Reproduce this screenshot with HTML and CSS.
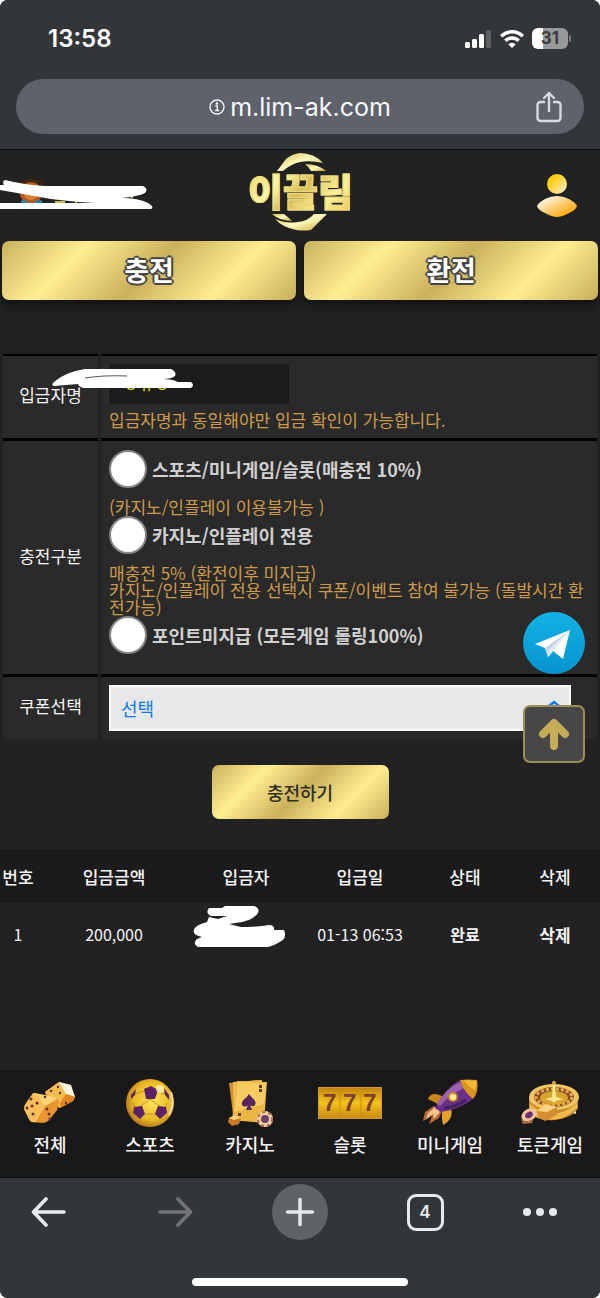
FILE: index.html
```
<!DOCTYPE html>
<html lang="ko">
    <head>
        <meta charset="utf-8" />
        <title>이끌림 - 충전</title>
        <meta name="viewport" content="width=device-width" />
        <link rel="stylesheet" href="styles.css">
    </head>

    <body>
        <div class="m-phone">
            <!-- 상태바 / 주소창 -->
            <div class="m-browser">
                <div class="status">
                    <span class="time">13:58</span>
                    <div class="signs">
                        <svg width="27" height="18" viewBox="0 0 27 18" fill="#fff">
                            <rect x="0" y="12" width="5" height="6" rx="1.5"/>
                            <rect x="7" y="9" width="5" height="9" rx="1.5"/>
                            <rect x="14" y="4" width="5" height="14" rx="1.5"/>
                            <rect x="21" y="0" width="5" height="18" rx="1.5" fill="#5d6063"/>
                        </svg>
                        <svg width="24" height="18" viewBox="0 0 24 18" fill="none" stroke="#fff" stroke-width="3.4">
                            <path d="M1.200 6.200a15.500 15.500 0 0 1 21.600 0M5.300 10.700a9.600 9.600 0 0 1 13.400 0"/>
                            <path d="M12 18l-3.800-3.800a5.500 5.500 0 0 1 7.600 0z" fill="#fff" stroke="none"/>
                        </svg>
                        <span class="battery">31</span>
                    </div>
                </div>
                <div class="address">
                    <a class="url" href="#">
                        <svg width="16" height="16" viewBox="0 0 16 16" fill="none" stroke="#f4f5f7" stroke-width="1.4">
                            <circle cx="8" cy="8" r="7"/>
                            <path d="M6.300 7h2v4.300M6 11.500h4.300"/>
                            <circle cx="7.900" cy="4.500" r=".6" fill="#f4f5f7"/>
                        </svg>
                        <span>m.lim-ak.com</span>
                    </a>
                    <button class="share" type="button" aria-label="공유">
                        <svg width="26" height="32" viewBox="0 0 26 32" fill="none" stroke="#d5d9e1" stroke-width="2.400" stroke-linecap="round" stroke-linejoin="round">
                            <path d="M8 11H4.500A3 3 0 0 0 1.500 14v13a3 3 0 0 0 3 3h17a3 3 0 0 0 3-3V14a3 3 0 0 0-3-3H18M13 20V2M8 7l5-5 5 5"/>
                        </svg>
                    </button>
                </div>
            </div>

            <!-- 헤더 -->
            <header class="m-header">
                <svg class="member" width="160" height="90" viewBox="0 0 160 90">
                    <circle cx="31" cy="42" r="11" fill="#b35b1f"/>
                    <circle cx="31" cy="42" r="7" fill="#d98235"/>
                    <path d="M20 33q10-7 24-1" stroke="#4a2a12" stroke-width="2" fill="none"/>
                    <path d="M21 51h6M35 51h7" stroke="#2687b5" stroke-width="3"/>
                    <path d="M55 51h10M76 50v4M92 50v4M115 50v4M132 42v5" stroke="#d6b754" stroke-width="2"/>
                    <path fill="#fff" d="M5 29Q25 34 45 35H143Q149 38 145 42 140 45 122 47 138 47 148 52 155 56 151 58H0V52H96Q60 50 40 46L0 39V34H4Q2 30 5 29z"/>
                </svg>
                <a class="logo" href="#">
                    <svg width="62" height="80" viewBox="0 0 62 80">
                        <defs>
                            <linearGradient id="logoGold" x1="0" y1="0" x2="1" y2="1">
                                <stop offset="0" stop-color="#d9bd4c"/>
                                <stop offset=".5" stop-color="#fdfbc0"/>
                                <stop offset="1" stop-color="#c7a334"/>
                            </linearGradient>
                        </defs>
                        <g fill="url(#logoGold)">
                            <path d="M7 19L16 7Q22 2 30 1Q44 1 53 11Q40 8 30 10Q21 12 13 19z"/>
                            <path d="M35 12Q48 12 56 19H41Q39 15 35 12z"/>
                            <path d="M57 62L41 78Q34 79 26 78Q12 75 5 67Q17 72 28 70Q38 69 44 62z"/>
                            <path d="M2 62H14Q19 66 22 69Q10 69 2 62z"/>
                        </g>
                    </svg>
                    <span>이끌림</span>
                </a>
                <a class="my" href="#" aria-label="내 정보">
                    <svg width="40" height="44" viewBox="0 0 40 44">
                        <defs>
                            <linearGradient id="myTop" x1="0" y1="0" x2="1" y2="1">
                                <stop offset=".3" stop-color="#ffcd16"/>
                                <stop offset="1" stop-color="#fff3dc"/>
                            </linearGradient>
                            <linearGradient id="myBody" x1="0" y1="0" x2="1" y2="1">
                                <stop offset=".2" stop-color="#fff0d5"/>
                                <stop offset=".8" stop-color="#ffab12"/>
                            </linearGradient>
                        </defs>
                        <circle cx="20" cy="10" r="10" fill="url(#myTop)"/>
                        <path d="M0 32Q1 29 8 25Q14 22 20 22Q26 22 32 25Q39 29 40 32Q39 36 32 39Q25 43 20 43Q15 43 8 39Q1 36 0 32z" fill="url(#myBody)"/>
                    </svg>
                </a>
            </header>

            <nav class="m-tabs">
                <a class="f-gold" href="#">충전</a>
                <a class="f-gold" href="#">환전</a>
            </nav>

            <!-- 충전 신청 -->
            <form class="m-charge">
                <table>
                    <tr>
                        <th><label for="name">입금자명</label></th>
                        <td>
                            <input class="name" id="name" type="text" value="ㅇㅠㅇ" />
                            <p>입금자명과 동일해야만 입금 확인이 가능합니다.</p>
                        </td>
                    </tr>
                    <tr>
                        <th>충전구분</th>
                        <td>
                            <label class="kind"><input type="radio" name="kind" />스포츠/미니게임/슬롯(매충전 10%)</label>
                            <p>(카지노/인플레이 이용불가능 )</p>
                            <label class="kind"><input type="radio" name="kind" />카지노/인플레이 전용</label>
                            <p>매충전 5% (환전이후 미지급)<br />카지노/인플레이 전용 선택시 쿠폰/이벤트 참여 불가능 (돌발시간 환전가능)</p>
                            <label class="kind last"><input type="radio" name="kind" />포인트미지급 (모든게임 롤링100%)</label>
                        </td>
                    </tr>
                    <tr>
                        <th><label for="coupon">쿠폰선택</label></th>
                        <td>
                            <div class="select">
                                <select id="coupon"><option>선택</option></select>
                                <svg width="14" height="18" viewBox="0 0 14 18" fill="none" stroke="#0a7cff" stroke-width="2.500" stroke-linecap="round">
                                    <path d="M2 6l5-4 5 4M2 12l5 4 5-4"/>
                                </svg>
                            </div>
                        </td>
                    </tr>
                </table>
                <button class="submit f-gold" type="button">충전하기</button>

                <svg class="mark" width="146" height="24" viewBox="0 0 146 24">
                    <path fill="#fff" d="M2 15Q14 4 34 1H120Q126 4 124 8 121 11 111 11 122 11 127 14H140Q144 17 140 20H33Q28 19 27 16 14 17 4 18 0 18 2 15z"/>
                    <path d="M34 10Q52 7 76 8" stroke="#555" stroke-width="1" fill="none"/>
                </svg>
                <div class="floats">
                    <a class="telegram" href="#" aria-label="텔레그램">
                        <svg width="62" height="62" viewBox="0 0 62 62">
                            <defs>
                                <linearGradient id="tg" x1="0" y1="0" x2="0" y2="1">
                                    <stop offset="0" stop-color="#13b3e4"/>
                                    <stop offset="1" stop-color="#0693cf"/>
                                </linearGradient>
                            </defs>
                            <circle cx="31" cy="31" r="31" fill="url(#tg)"/>
                            <path d="M12 32L47 18L40 47L30 39L25 45L22 36z" fill="#fff"/>
                            <path d="M22 36L47 18L26 38L25 45z" fill="#c3d5e6"/>
                            <path d="M26 38L47 18L30 39L25 45z" fill="#dfe9f2"/>
                        </svg>
                    </a>
                    <button class="top" type="button" aria-label="맨 위로">
                        <svg width="32" height="34" viewBox="0 0 32 34" fill="none" stroke="#c6ab59" stroke-width="8" stroke-linecap="round" stroke-linejoin="round">
                            <path d="M16 29V7M5 17L16 6l11 11"/>
                        </svg>
                    </button>
                </div>
            </form>

            <!-- 충전 내역 -->
            <div class="m-list">
                <table>
                    <thead>
                        <tr><th class="no">번호</th><th class="money">입금금액</th><th class="who">입금자</th><th class="date">입금일</th><th class="state">상태</th><th class="del">삭제</th></tr>
                    </thead>
                    <tbody>
                        <tr>
                            <td>1</td>
                            <td>200,000</td>
                            <td>
                                <svg width="94" height="44" viewBox="0 0 94 44">
                                    <path fill="#fff" d="M17 3L30 3 33 1H62Q68 3 66 8 61 15 50 17L37 19 49 22Q65 22 77 20 83 20 82 25L92 25Q94 29 92 34 86 39 76 42H6Q0 39 5 34L10 32Q0 30 2 25 3 20 15 17L17 12 26 14 35 11H19Q13 8 17 3z"/>
                                </svg>
                            </td>
                            <td>01-13 06:53</td>
                            <td class="done">완료</td>
                            <td><a href="#">삭제</a></td>
                        </tr>
                    </tbody>
                </table>
            </div>

            <!-- 하단 메뉴 -->
            <nav class="m-menu">
                <a href="#">
                    <svg width="52" height="48" viewBox="0 0 52 48">
                        <path d="M21 13L35 3L46 6L51 18L49 22L36 29L24 24z" fill="#e58f2a"/>
                        <path d="M21 13L35 3L44 17L36 29z" fill="#f5bd50"/>
                        <path d="M35 3L47 6L51 18L42 15z" fill="#fff6df"/>
                        <path d="M42 15L51 18L49 22L36 29L36 24z" fill="#e08424"/>
                        <path d="M10 14L31 18Q35 19 34 23L33 31L24 42Q22 44 18 44L8 43Q6 43 5 40L0 30Q0 28 1 26z" fill="#e38a2b"/>
                        <path d="M10 14L31 18Q35 19 33 21L20 28L2 27z" fill="#fcd273"/>
                        <path d="M2 24L9 14Q17 18 20 27L11 43Q7 44 5 40L0 30Q0 27 2 24z" fill="#f9bf56"/>
                        <path d="M20 27L33 19L35 22L33 31L24 42L11 43z" fill="#e9962f"/>
                        <path d="M11 43L20 27L33 20" fill="none" stroke="#ffdb86"/>
                        <g fill="#6b2d45"><circle cx="7" cy="20" r="1.500"/><circle cx="13" cy="24" r="1.500"/><circle cx="8" cy="27" r="1.500"/><circle cx="3" cy="29" r="1.500"/><circle cx="9" cy="35" r="1.500"/><circle cx="21" cy="18" r="1.300"/><circle cx="23" cy="30" r="1.500"/><circle cx="25" cy="35" r="1.500"/><circle cx="26" cy="40" r="1.500"/><circle cx="34" cy="8" r="1.200"/><circle cx="27" cy="12" r="1.200"/><circle cx="36" cy="14" r="1.200"/><circle cx="42" cy="24" r="1.200"/></g>
                    </svg>
                    <span>전체</span>
                </a>
                <a href="#">
                    <svg width="48" height="48" viewBox="0 0 48 48">
                        <defs>
                            <radialGradient id="ball" cx=".55" cy=".45" r=".6">
                                <stop offset="0" stop-color="#ffe75d"/>
                                <stop offset=".65" stop-color="#e9ba25"/>
                                <stop offset="1" stop-color="#ae6d1d"/>
                            </radialGradient>
                        </defs>
                        <circle cx="24" cy="24" r="24" fill="url(#ball)"/>
                        <path d="M24 20v-5M24 20l-11 8M24 20l11 8M9 15l9-3M39 15l-9-3M19 35h10M7 24l2 5M41 24l-2 5" stroke="#c6901a" fill="none"/>
                        <g fill="#5c2266"><path d="M18 10L25 7L32 11L29 20H20z"/><path d="M8 28L16 27L19 35L14 40L7 34z"/><path d="M40 28L32 27L29 35L34 40L41 34z"/><path d="M5 16L10 10L9 16L5 20z"/><path d="M43 16L38 9L39 16L43 21z"/></g>
                        <circle cx="34" cy="10" r="4" fill="#fff7cd" opacity=".7"/>
                        <path d="M45 13Q49 24 43 36" stroke="#f3d8b1" stroke-width="2" fill="none"/>
                    </svg>
                    <span>스포츠</span>
                </a>
                <a href="#">
                    <svg width="48" height="48" viewBox="0 0 48 48">
                        <path d="M3 4L32 1L28 40L8 43z" fill="#cf9330"/>
                        <path d="M7 3L36 1L34 40L8 42z" fill="#f0be54"/>
                        <path d="M11 2L41 3L38 44L6 41z" fill="#e9b643"/>
                        <path d="M12 3L40 4L38 25L8 33z" fill="#f7cd61"/>
                        <path d="M23 15C20 20 15 21 16 26C18 29 22 27 22 26L20 31H26L24 26C27 29 31 26 29 22C27 19 25 18 23 15z" fill="#58255e"/>
                        <path d="M33 6h3v3h-3zM33 10h3v3h-3zM12 34h3v3h-3z" fill="#6c3434"/>
                        <circle cx="39" cy="40" r="8" fill="#f6d4a0"/>
                        <circle cx="39" cy="40" r="7" fill="none" stroke="#b46656" stroke-width="2" stroke-dasharray="3 3"/>
                        <circle cx="39" cy="40" r="4" fill="#72406f"/>
                        <path d="M3 39L9 36L15 39L13 45L6 47L2 43z" fill="#c97922"/>
                        <path d="M3 39L9 36L15 39L8 41z" fill="#ffd376"/>
                    </svg>
                    <span>카지노</span>
                </a>
                <a href="#">
                    <svg width="64" height="48" viewBox="0 0 64 48">
                        <defs>
                            <linearGradient id="reel" x1="0" y1="0" x2="0" y2="1">
                                <stop offset="0" stop-color="#c08010"/>
                                <stop offset=".5" stop-color="#f3c317"/>
                                <stop offset="1" stop-color="#c58510"/>
                            </linearGradient>
                        </defs>
                        <rect y="8" width="64" height="32" fill="url(#reel)"/>
                        <path d="M22 8v32M43 8v32" stroke="#c98a10"/>
                        <path d="M.5 8.500h63v31H.5z" fill="none" stroke="#d39a25"/>
                        <text class="seven" x="5" y="32">7</text>
                        <text class="seven" x="25" y="32">7</text>
                        <text class="seven" x="45" y="32">7</text>
                    </svg>
                    <span>슬롯</span>
                </a>
                <a href="#">
                    <svg width="56" height="48" viewBox="0 0 56 48">
                        <path d="M20 17Q9 12 6 20L14 24L19 29z" fill="#cc861d"/>
                        <path d="M29 29Q32 40 21 46L20 40L20 31z" fill="#e5a12c"/>
                        <path d="M12 27L3 33L1 42L10 37L7 45L17 39L20 32z" fill="#b96a3b"/>
                        <path d="M13 28L6 34L4 40L11 35L12 40L18 33z" fill="#f0c48a"/>
                        <path d="M13 29Q23 9 38 1L51 20Q36 31 19 33z" fill="#693087"/>
                        <path d="M15 25Q25 9 38 3L43 9Q29 14 18 27z" fill="#9d62ad"/>
                        <path d="M38 1Q47 0 55 1Q57 13 51 20Q42 13 38 1z" fill="#d9961c"/>
                        <path d="M42 1L55 2L53 11Q46 8 42 1z" fill="#f2bb36"/>
                        <circle cx="31" cy="18" r="5" fill="#c28727"/><circle cx="31" cy="18" r="3.200" fill="#ffee8b"/>
                        <path d="M22 29Q34 28 44 21" stroke="#452161" stroke-width="3" fill="none"/>
                    </svg>
                    <span>미니게임</span>
                </a>
                <a href="#">
                    <svg width="60" height="48" viewBox="0 0 60 48">
                        <path d="M9 18V33Q17 43 35 41Q54 38 58 29V18z" fill="#c88c2b"/>
                        <path d="M10 25Q33 45 57 24V29Q42 43 28 40Q15 39 10 34z" fill="#edbb4c"/>
                        <ellipse cx="34" cy="18" rx="25" ry="13" fill="#f0c763"/>
                        <ellipse cx="34" cy="18" rx="20" ry="10" fill="#8c4b22"/>
                        <ellipse cx="34" cy="18" rx="18" ry="8" fill="none" stroke="#e4ad54" stroke-width="3" stroke-dasharray="3 2"/>
                        <ellipse cx="34" cy="19" rx="14" ry="7" fill="#d8a42f"/>
                        <path d="M25 20L32 18L33 2H35L36 18L43 20L36 22L34 24L32 22z" fill="#ffe88b"/>
                        <circle cx="34" cy="4" r="2" fill="#d6a63c"/>
                        <path d="M17 32L25 25L37 28L37 36L25 42L18 38z" fill="#d48d32"/>
                        <path d="M17 32L25 25L37 28L27 33z" fill="#ffd281"/>
                        <ellipse cx="9" cy="36" rx="8" ry="6" fill="#f0c3a1" transform="rotate(-30 9 36)"/>
                        <ellipse cx="9" cy="36" rx="4" ry="3" fill="#67316d" transform="rotate(-30 9 36)"/>
                        <path d="M1 40L6 43L13 40L12 44L3 45z" fill="#b66f3b"/>
                        <path d="M53 34l3-2v3z" fill="#fff0bf"/>
                    </svg>
                    <span>토큰게임</span>
                </a>
            </nav>

            <!-- 브라우저 하단바 -->
            <div class="m-toolbar">
                <div class="tools">
                    <button type="button" aria-label="뒤로">
                        <svg width="36" height="30" viewBox="0 0 36 30" fill="none" stroke="#e6e9ee" stroke-width="3.600" stroke-linecap="round" stroke-linejoin="round"><path d="M33 15H3M15 2L2.500 15L15 28"/></svg>
                    </button>
                    <button type="button" aria-label="앞으로" disabled>
                        <svg width="36" height="30" viewBox="0 0 36 30" fill="none" stroke="#717375" stroke-width="3.600" stroke-linecap="round" stroke-linejoin="round"><path d="M3 15h30M21 2l12.500 13L21 28"/></svg>
                    </button>
                    <button class="plus" type="button" aria-label="새 탭">
                        <svg width="30" height="30" viewBox="0 0 30 30" stroke="#e3e6ea" stroke-width="3.600" stroke-linecap="round"><path d="M15 2.500v25M2.500 15h25"/></svg>
                    </button>
                    <button class="count" type="button">4</button>
                    <button type="button" aria-label="더보기">
                        <svg width="36" height="10" viewBox="0 0 36 10" fill="#e6e9ee"><circle cx="5" cy="5" r="4"/><circle cx="18" cy="5" r="4"/><circle cx="31" cy="5" r="4"/></svg>
                    </button>
                </div>
                <div class="home"></div>
            </div>
        </div>
    </body>
</html>
```
FILE: styles.css
```
*{margin:0;padding:0;box-sizing:border-box;}
body{background:#fff;font-family:"Noto Sans CJK KR",sans-serif;color:#f4f4f4;}
a{color:inherit;text-decoration:none;}
button{border:0;background:none;font-family:inherit;color:inherit;}
svg{display:block;}
table{width:100%;}

.m-phone{display:flex;flex-direction:column;min-height:100vh;background:#222;border-radius:8px;overflow:hidden;}

/* 상단 브라우저 */
.m-browser{padding:0 16px;height:150px;background:#333639;border-bottom:1px solid #111;font-family:Inter,sans-serif;}
.m-browser .status{display:flex;justify-content:space-between;align-items:center;height:79px;padding:0 12px 2px 32px;}
.m-browser .time{font-size:24px;font-weight:600;color:#fff;}
.m-browser .signs{display:flex;align-items:center;gap:8px;}
.m-browser .battery{position:relative;width:36px;height:21px;margin-right:4px;border-radius:6px;background:linear-gradient(to right,#fff 11px,#98999b 11px);font-size:17px;line-height:21px;font-weight:700;text-align:center;color:#3a3c3f;}
.m-browser .battery:after{content:"";position:absolute;left:37px;top:7px;width:2px;height:7px;border-radius:0 2px 2px 0;background:#7c7e80;}
.m-browser .address{display:grid;grid-template-columns:50px 1fr 50px;align-items:center;height:55px;padding:0 10px;border-radius:28px;background:#5e626a;}
.m-browser .url{grid-column:2;display:flex;justify-content:center;align-items:center;gap:5px;font-size:25px;line-height:30px;color:#f7f8fa;}
.m-browser .share{display:flex;justify-content:center;}

/* 헤더 */
.m-header{position:relative;display:flex;justify-content:space-between;align-items:center;height:91px;padding-right:23px;}
.m-header .member{width:160px;height:90px;}
.m-header .logo{position:absolute;left:50%;top:0;width:104px;height:84px;margin-left:-52px;}
.m-header .logo svg{margin:2px 0 0 22px;}
.m-header .logo span{position:absolute;left:0;top:18px;font-size:38px;line-height:44px;font-weight:900;white-space:nowrap;background:linear-gradient(135deg,#ecd15d,#fdf7a5 30%,#d8bc58 50%,#fcf29a 75%,#e3c552);-webkit-background-clip:text;background-clip:text;-webkit-text-stroke:1px #efdc7c;color:transparent;}

.f-gold{background:linear-gradient(135deg,#c9b15d,#ffee91 25%,#cab15c 50%,#ffed8f 75%,#c8af5b);border-radius:7px;}
.m-tabs{display:grid;grid-template-columns:1fr 1fr;gap:8px;padding:0 2px;}
.m-tabs a{height:59px;font-size:27px;line-height:57px;font-weight:700;text-align:center;color:#fff;box-shadow:0 5px 10px #111;text-shadow:-2px 0 #444,2px 0 #444,0 -2px #444,0 2px #444,-1px -1px #444,1px -1px #444,-1px 1px #444,1px 1px #444;}

/* 충전 신청 */
.m-charge{position:relative;padding-top:54px;}
.m-charge table{border-spacing:3px 0;font-size:17px;}
.m-charge th,.m-charge td{background:#2a2a2a;border-top:3px solid #000;}
.m-charge tr:first-child th,.m-charge tr:first-child td{border-top-width:2px;}
.m-charge th{width:95px;padding-bottom:4px;font-weight:400;line-height:24px;}
.m-charge td{padding:8px;}
.m-charge p{line-height:17px;color:#cd9a4b;}
.m-charge .name{display:block;width:180px;height:40px;margin-bottom:7px;padding:0 14px;border:0;background:#1c1c1c;font-family:inherit;font-size:17px;color:#d5df16;}
.m-charge tr:first-child td{padding-bottom:10px;}
.m-charge .kind{display:flex;align-items:center;gap:5px;height:38px;margin:1px 0 10px;font-size:18px;font-weight:700;color:#d0d0d0;}
.m-charge .kind.last{margin-bottom:12px;}
.m-charge .kind input{appearance:none;flex:none;width:38px;height:38px;border:2px solid #858587;border-radius:50%;background:#fff;}
.m-charge .select{position:relative;margin-right:18px;}
.m-charge select{display:block;appearance:none;width:100%;height:46px;padding:0 10px;border:2px solid #fff;border-radius:0;background:#e8e8ea;font-family:inherit;font-size:18px;color:#087be8;}
.m-charge .select svg{position:absolute;right:10px;top:15px;}
.m-charge .submit{display:block;width:177px;height:54px;margin:26px auto 30px;font-size:18px;font-weight:500;color:#302d22;}
.m-charge .mark{position:absolute;left:51px;top:68px;}
.m-charge .floats{position:absolute;right:15px;top:312px;display:grid;gap:31px;}
.m-charge .top{display:flex;justify-content:center;align-items:center;width:62px;height:58px;border:2px solid #a08d56;border-radius:7px;background:#474747;}

/* 충전 내역 */
.m-list{flex:1;}
.m-list table{table-layout:fixed;border-collapse:collapse;text-align:center;}
.m-list th{height:54px;background:#1b1b1b;font-size:17px;font-weight:500;white-space:nowrap;}
.m-list td{height:62px;font-size:16px;white-space:nowrap;}
.m-list td svg{margin:0 0 14px;}
.m-list .no{width:6%;}
.m-list .money{width:26%;}
.m-list .who{width:18%;}
.m-list .date{width:20%;}
.m-list .state,.m-list .del{width:15%;}
.m-list .done,.m-list td a{font-weight:700;}
.m-list td a{font-size:17px;}

/* 하단 메뉴 */
.m-menu{display:grid;grid-template-columns:repeat(6,1fr);height:107px;padding-top:9px;background:#191919;}
.m-menu a{display:flex;flex-direction:column;align-items:center;gap:4px;font-size:18px;line-height:26px;font-weight:500;}
.m-menu .seven{font:700 24px "Liberation Sans",sans-serif;fill:#80402f;}

/* 하단 브라우저 */
.m-toolbar{height:121px;border-top:1px solid #111;background:#333639;}
.m-toolbar .tools{display:grid;grid-template-columns:98fr 154fr 96fr 154fr 76fr;align-items:center;justify-items:center;height:68px;padding-right:22px;}
.m-toolbar .plus{display:flex;justify-content:center;align-items:center;width:56px;height:56px;border-radius:50%;background:#5f6368;}
.m-toolbar .count{width:37px;height:37px;border:3px solid #e6e9ee;border-radius:9px;font:600 17px Inter,sans-serif;color:#e6e9ee;}
.m-toolbar .home{width:36%;height:8px;margin:32px auto 0;border-radius:4px;background:#fff;}
```
